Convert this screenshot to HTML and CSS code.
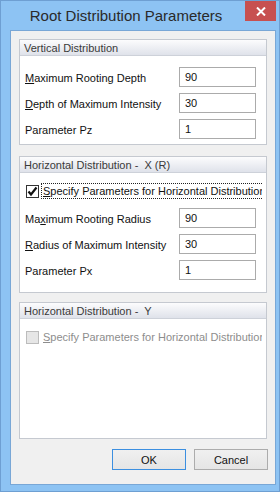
FILE: index.html
```html
<!DOCTYPE html>
<html>
<head>
<meta charset="utf-8">
<link rel="stylesheet" href="styles.css">
</head>
<body>
<div class="window">
  <div class="titlebar">
    <div class="title">Root Distribution Parameters</div>
    <div class="close">
      <svg width="10" height="9" viewBox="0 0 10 9"><path d="M1 0.5 L9 8.5 M9 0.5 L1 8.5" stroke="#fff" stroke-width="2"/></svg>
    </div>
  </div>
  <div class="client">
    <div class="group g1">
      <div class="gh">Vertical Distribution</div>
      <div class="gb">
        <div class="rows">
          <div class="row"><span class="lbl"><u>M</u>aximum Rooting Depth</span><div class="inp">90</div></div>
          <div class="row"><span class="lbl"><u>D</u>epth of Maximum Intensity</span><div class="inp">30</div></div>
          <div class="row"><span class="lbl">Parameter Pz</span><div class="inp">1</div></div>
        </div>
      </div>
    </div>
    <div class="group g2">
      <div class="gh">Horizontal Distribution -&nbsp; X (R)</div>
      <div class="gb">
        <div class="chkrow">
          <span class="cb checked"><svg width="13" height="13" viewBox="0 0 13 13"><path d="M2.5 6.5 L5 9.5 L10.5 2.5" stroke="#111" stroke-width="2.2" fill="none"/></svg></span>
          <span class="cbl focus"><u>S</u>pecify Parameters for Horizontal Distribution</span>
        </div>
        <div class="rows">
          <div class="row"><span class="lbl">Ma<u>x</u>imum Rooting Radius</span><div class="inp">90</div></div>
          <div class="row"><span class="lbl"><u>R</u>adius of Maximum Intensity</span><div class="inp">30</div></div>
          <div class="row"><span class="lbl">Parameter Px</span><div class="inp">1</div></div>
        </div>
      </div>
    </div>
    <div class="group g3">
      <div class="gh">Horizontal Distribution -&nbsp; Y</div>
      <div class="gb">
        <div class="chkrow disabled">
          <span class="cb"></span>
          <span class="cbl"><u>S</u>pecify Parameters for Horizontal Distribution</span>
        </div>
      </div>
    </div>
    <div class="buttons">
      <div class="btn default">OK</div>
      <div class="btn">Cancel</div>
    </div>
  </div>
</div>
</body>
</html>
```
FILE: styles.css
```css
* { box-sizing: border-box; }
html, body { margin: 0; padding: 0; }
body {
  width: 280px;
  height: 492px;
  overflow: hidden;
  font-family: "Liberation Sans", Arial, sans-serif;
  font-size: 11px;
}
.window {
  width: 280px;
  height: 492px;
  background: #8dc3f3;
  border: 1px solid #6e9fd2;
  padding: 0 3px 6px 9px;
  display: flex;
  flex-direction: column;
}
.titlebar {
  height: 29px;
  display: flex;
  align-items: flex-start;
}
.title {
  flex: 1;
  text-align: center;
  font-size: 15px;
  color: #2a2a2a;
  padding-top: 6px;
  padding-right: 3px;
  letter-spacing: 0;
}
.close {
  width: 31px;
  height: 20px;
  background: #c75050;
  display: flex;
  align-items: center;
  justify-content: center;
}
.client {
  height: 455px;
  background: #f0f0f0;
  border: 1px solid #79a7d6;
  padding: 8px 8px 0 8px;
  display: flex;
  flex-direction: column;
}
.group {
  border: 1px solid #c5c9d0;
  background: #fff;
  display: flex;
  flex-direction: column;
}
.g1 { height: 106px; }
.g2 { height: 137px; margin-top: 11px; }
.g3 { height: 137px; margin-top: 9px; }
.gh {
  height: 16px;
  background: linear-gradient(#fcfcfd, #dfe2ea);
  border-bottom: 1px solid #cdd1d9;
  color: #3a3a3a;
  padding: 1px 0 0 4px;
  line-height: 14px;
  white-space: nowrap;
}
.gb {
  padding: 10px 10px 0 5px;
  display: flex;
  flex-direction: column;
}
.g1 .gb { padding-top: 11px; }
.rows {
  display: flex;
  flex-direction: column;
  gap: 6px;
}
.chkrow + .rows { margin-top: 9px; }
.row {
  display: flex;
  align-items: center;
  justify-content: space-between;
  height: 20px;
}
.lbl {
  color: #111;
  white-space: nowrap;
  padding-top: 1px;
}
u { text-decoration: underline; text-underline-offset: 1px; }
.inp {
  width: 77px;
  height: 20px;
  border: 1px solid #ababab;
  background: #fff;
  color: #111;
  padding: 3px 0 0 5px;
  line-height: 13px;
}
.chkrow {
  height: 16px;
  display: flex;
  align-items: center;
  padding-left: 1px;
  overflow: hidden;
  width: 237px;
}
.cb {
  flex: none;
  width: 13px;
  height: 13px;
  border: 1px solid #333;
  background: #fff;
  display: flex;
  align-items: center;
  justify-content: center;
  margin-right: 2px;
}
.cb svg { display: block; margin: -1px; }
.cbl {
  flex: none;
  color: #111;
  white-space: nowrap;
  height: 16px;
  line-height: 14px;
  padding: 0 1px;
  border: 1px dotted transparent;
}
.cbl.focus { border-color: #222; }
.chkrow.disabled .cb { background: #e6e6e6; border-color: #bcbcbc; }
.chkrow.disabled .cbl { color: #8d8d8d; }
.buttons {
  display: flex;
  justify-content: flex-end;
  gap: 8px;
  margin-top: 10px;
  padding-right: 0;
  margin-right: -1px;
}
.btn {
  width: 74px;
  height: 21px;
  border: 1px solid #acacac;
  background: linear-gradient(#f0f0f0, #e5e5e5);
  color: #111;
  display: flex;
  align-items: center;
  justify-content: center;
}
.btn.default { border-color: #3c8fe0; }
```
